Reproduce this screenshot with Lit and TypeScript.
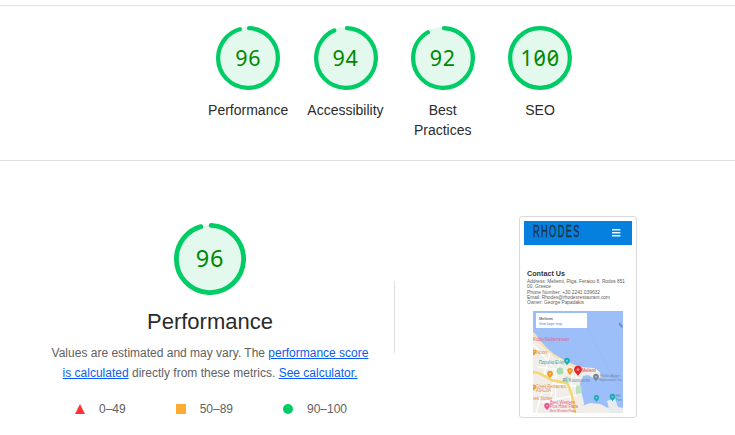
import { LitElement, html, svg, css } from "lit";
import { customElement, property } from "lit/decorators.js";

@customElement("score-gauge")
class ScoreGauge extends LitElement {
  @property({ type: Number }) score = 0;
  @property({ type: Number }) size = 64;

  static styles = css`
    :host { display: block; }
    .gauge { display: grid; place-items: center; }
    .gauge > * { grid-area: 1 / 1; }
    svg { display: block; }
    .base { fill: #e4f9ee; }
    .arc { fill: none; stroke: #00cc66; stroke-width: 8; stroke-linecap: round; }
    .value {
      font-family: "Noto Sans", sans-serif;
      font-feature-settings: "zero" 1;
      line-height: 1;
      color: #080;
      letter-spacing: 0.035em;
      margin-top: -1px;
    }
  `;

  render() {
    const r = 56;
    const len = 2 * Math.PI * r;
    const full = this.score >= 100;
    const dash = full ? len : (this.score / 100) * len - 4;
    return html`<div class="gauge">
      <svg width=${this.size} height=${this.size} viewBox="0 0 120 120">
        <circle class="base" cx="60" cy="60" r="58"></circle>
        <circle class="arc" cx="60" cy="60" r=${r}
          stroke-dasharray="${dash} ${len}" transform="rotate(${full ? -90 : -88} 60 60)"></circle>
      </svg>
      <span class="value" style="font-size:${this.size > 64 ? 23.5 : 21.5}px">${this.score}</span>
    </div>`;
  }
}

@customElement("page-preview")
class PagePreview extends LitElement {
  static styles = css`
    :host { display: block; box-sizing: border-box; width: 118px; height: 202px; padding: 4px; border: 1px solid #dadada; border-radius: 3px; background: #fff; }
    svg { display: block; font-family: "Liberation Sans", Arial, sans-serif; }
    .info { font-size: 5px; fill: #5c5c5c; }
    .place { font-size: 4.6px; }
    .pink { fill: #e2588a; }
    .orange { fill: #e08a38; }
    .teal { fill: #2a9ba4; }
    .grey { fill: #7386a0; }
    .small { font-size: 3.4px; }
    .tiny { font-size: 2.8px; }
  `;

  pin(x: number, y: number, color: string, s = 1) {
    return svg`<g transform="translate(${x} ${y}) scale(${s})">
      <path d="M0 4.6C-.7 2.6-2.9 2-2.9-.3a2.9 2.9 0 0 1 5.8 0C2.9 2 .7 2.6 0 4.6Z" fill=${color}></path>
      <circle cy="-.3" r="1" fill="#fff" fill-opacity=".45"></circle>
    </g>`;
  }

  render() {
    return html`<svg width="108" height="192" viewBox="0 0 108 192">
      <rect width="108" height="24" fill="#0580df"></rect>
      <text transform="translate(9 16.3) scale(.56 1)" font-size="16.6" textLength="83" fill="#1d3446" stroke="#1d3446" stroke-width=".35">RHODES</text>
      <path d="M88 8.7h8.4M88 11.7h8.4M88 14.7h8.4" stroke="#e7f4ff" stroke-width="1.4"></path>
      <text x="3" y="55.4" font-size="7.3" font-weight="700" textLength="38" lengthAdjust="spacingAndGlyphs" fill="#333">Contact Us</text>
      <g class="info">
        <text x="3" y="61.9" textLength="98" lengthAdjust="spacingAndGlyphs">Address: Meltemi, Riga. Feraiou 8, Rodos 851</text>
        <text x="3" y="67.4" textLength="24" lengthAdjust="spacingAndGlyphs">00, Greece</text>
        <text x="3" y="72.9" textLength="73" lengthAdjust="spacingAndGlyphs">Phone Number: +30 2241 039632</text>
        <text x="3" y="78.2" textLength="83" lengthAdjust="spacingAndGlyphs">Email: Rhodes@rhodesrestaurant.com</text>
        <text x="3" y="83.4" textLength="57" lengthAdjust="spacingAndGlyphs">Owner: George Papadakis</text>
      </g>
      <svg x="9" y="90" width="90" height="102" viewBox="0 0 90 102">
        <rect width="90" height="102" fill="#9dbff9"></rect>
        <path d="M0 22C8 33 17 43 27 47c7 4 12 7 20 9l13 1c6 1 7 5 9 9l-7 2-7-4-5 1-3 8 2 11 2 8-2 10H0Z" fill="#f1eee9"></path>
        <path d="M49 95l8-3 10 1 8 4 15 1v4H49Z" fill="#f1eee9"></path>
        <path d="M74 90l8-3 3 9 5 1v5H77Z" fill="#e8ebee"></path>
        <path d="M0 22c7 10 16 21 27 26 8 4 14 8 22 9" fill="none" stroke="#f9e3ae" stroke-width="2.4"></path>
        <path d="M0 33l22 25 13 3 13 8M5 56l17 2-4 27M17 42l-6 22M27 48l-5 23 1 27M0 73l20 9M10 91l33-7M39 63l-2 33M10 77L3 102M23 73l25 3" fill="none" stroke="#fff" stroke-width="1.3"></path>
        <path d="M0 61c6 0 11 3 18 8l16 3c4 6 6 14 8 30" fill="none" stroke="#f7d56f" stroke-width="2.5"></path>
        <circle cx="27" cy="60" r="3.5" fill="#a9dbb2"></circle>
        <path d="M29 69l5-4 3 3-3 5ZM43 75l5-1 1 8-6 1Z" fill="#b9e2bd"></path>
        <path d="M54 17l34 66" fill="none" stroke="#93b6f2" stroke-width=".5"></path>
        <path d="M86 11l3.5 3.5v3l-3.5-3.5Z" fill="#668cd2"></path>
        <rect x="3" y="2" width="51" height="15" rx=".7" fill="#fff"></rect>
        <text x="6" y="9" font-size="4.4" fill="#333" textLength="14" lengthAdjust="spacingAndGlyphs">Meltemi</text>
        <text x="6" y="13.8" font-size="3.6" fill="#3d83dc" textLength="23" lengthAdjust="spacingAndGlyphs">View larger map</text>
        <g class="place">
          <text class="pink" x="0" y="30" textLength="36" lengthAdjust="spacingAndGlyphs">Rodos Mediterranean</text>
          <text class="orange" x="3" y="43.3" textLength="11" lengthAdjust="spacingAndGlyphs">Noon</text>
          <text class="teal" x="6" y="53.3" textLength="25" lengthAdjust="spacingAndGlyphs">Παραλία Ελλη</text>
          <text x="49" y="61.3" fill="#d33b46" textLength="14" lengthAdjust="spacingAndGlyphs">Meltemi</text>
          <text class="grey" x="30" y="71.3" textLength="27" lengthAdjust="spacingAndGlyphs">Pl. Kountouriot</text>
          <text class="grey small" x="67" y="66.3" textLength="20" lengthAdjust="spacingAndGlyphs">Elafos Aggel</text>
          <text class="grey tiny" x="66" y="70.3" textLength="22.5" lengthAdjust="spacingAndGlyphs">Hippocampos Sta</text>
          <text class="orange" x="3" y="76.7" textLength="30" lengthAdjust="spacingAndGlyphs">Greek Restaurant</text>
          <text class="orange" x="3" y="80.7" textLength="15" lengthAdjust="spacingAndGlyphs">ASALMA</text>
          <text class="orange" x="0" y="88.7" textLength="19" lengthAdjust="spacingAndGlyphs">eek Stories</text>
          <text class="pink" x="17" y="93.2" textLength="25" lengthAdjust="spacingAndGlyphs">Best Western</text>
          <text class="pink" x="17" y="97.2" textLength="28" lengthAdjust="spacingAndGlyphs">Plus Hotel Plaza</text>
          <text class="pink small" x="17" y="101" textLength="26" lengthAdjust="spacingAndGlyphs">Best Western Plaza</text>
          <text class="teal small" x="83" y="85.5">Elli</text>
          <text class="teal small" x="82.5" y="89.5">Port</text>
        </g>
        ${this.pin(1, 41, "#f29a26", 0.8)} ${this.pin(34, 50, "#20a8b7")}
        ${this.pin(17, 63, "#f29a26")} ${this.pin(37, 60, "#f29a26", 0.95)}
        ${this.pin(45, 59, "#df292f", 1.35)} ${this.pin(63, 66, "#71849a")}
        ${this.pin(1, 76, "#f29a26", 0.8)} ${this.pin(14, 95, "#e95391", 0.95)}
        ${this.pin(63.5, 87, "#20a8b7", 0.9)} ${this.pin(79.5, 86, "#20a8b7")}
      </svg>
    </svg>`;
  }
}

@customElement("app-root")
class AppRoot extends LitElement {
  static styles = css`
    :host { display: block; width: 735px; height: 435px; overflow: hidden; background: #fff; font-family: "Liberation Sans", Arial, sans-serif; color: #2b2b2b; }
    .scores { display: flex; box-sizing: border-box; height: 156px; margin-top: 5px; padding: 20px 0 0 199.5px; border: solid #dfdfdf; border-width: 1px 0; }
    .item { width: 97.3px; text-align: center; font-size: 14px; line-height: 20px; }
    .item score-gauge { margin-left: 0.2px; }
    .item .label { width: 82px; margin: 10px auto 0; }
    .detail { display: flex; }
    .summary { display: flex; flex-direction: column; align-items: center; width: 394px; padding: 62px 0 0 26px; box-sizing: border-box; }
    h1 { margin: 13px 0 0; font-size: 22px; font-weight: 400; line-height: 28px; }
    p { margin: 7px 0 0; font-size: 12px; line-height: 20px; color: #616161; text-align: center; white-space: nowrap; }
    a { color: #0a5cf5; text-decoration: underline; }
    .legend { display: flex; width: 272px; margin: 16px 0 0 2px; justify-content: space-between; font-size: 12px; line-height: 20px; color: #616161; }
    .range { display: flex; align-items: center; gap: 14px; }
    .range svg { display: block; }
    .divider { width: 1px; height: 72px; margin-top: 120px; background: #dedede; }
    page-preview { margin: 55px 0 0 124px; }
  `;

  render() {
    const scores = [
      { label: "Performance", value: 96 },
      { label: "Accessibility", value: 94 },
      { label: "Best Practices", value: 92 },
      { label: "SEO", value: 100 },
    ];
    return html`
      <section class="scores">
        ${scores.map((s) => html`<div class="item">
          <score-gauge .score=${s.value}></score-gauge>
          <div class="label">${s.label}</div>
        </div>`)}
      </section>
      <section class="detail">
        <div class="summary">
          <score-gauge .score=${96} .size=${72}></score-gauge>
          <h1>Performance</h1>
          <p>Values are estimated and may vary. The <a>performance score</a><br /><a>is calculated</a> directly from these metrics. <a>See calculator.</a></p>
          <div class="legend">
            <span class="range"><svg width="10" height="10"><path d="M5 0l5 10H0Z" fill="#f33"></path></svg>0–49</span>
            <span class="range"><svg width="10" height="10"><path d="M0 0h10v10H0Z" fill="#fa3"></path></svg>50–89</span>
            <span class="range"><svg width="10" height="10"><circle cx="5" cy="5" r="5" fill="#0c6"></circle></svg>90–100</span>
          </div>
        </div>
        <div class="divider"></div>
        <page-preview></page-preview>
      </section>
    `;
  }
}
